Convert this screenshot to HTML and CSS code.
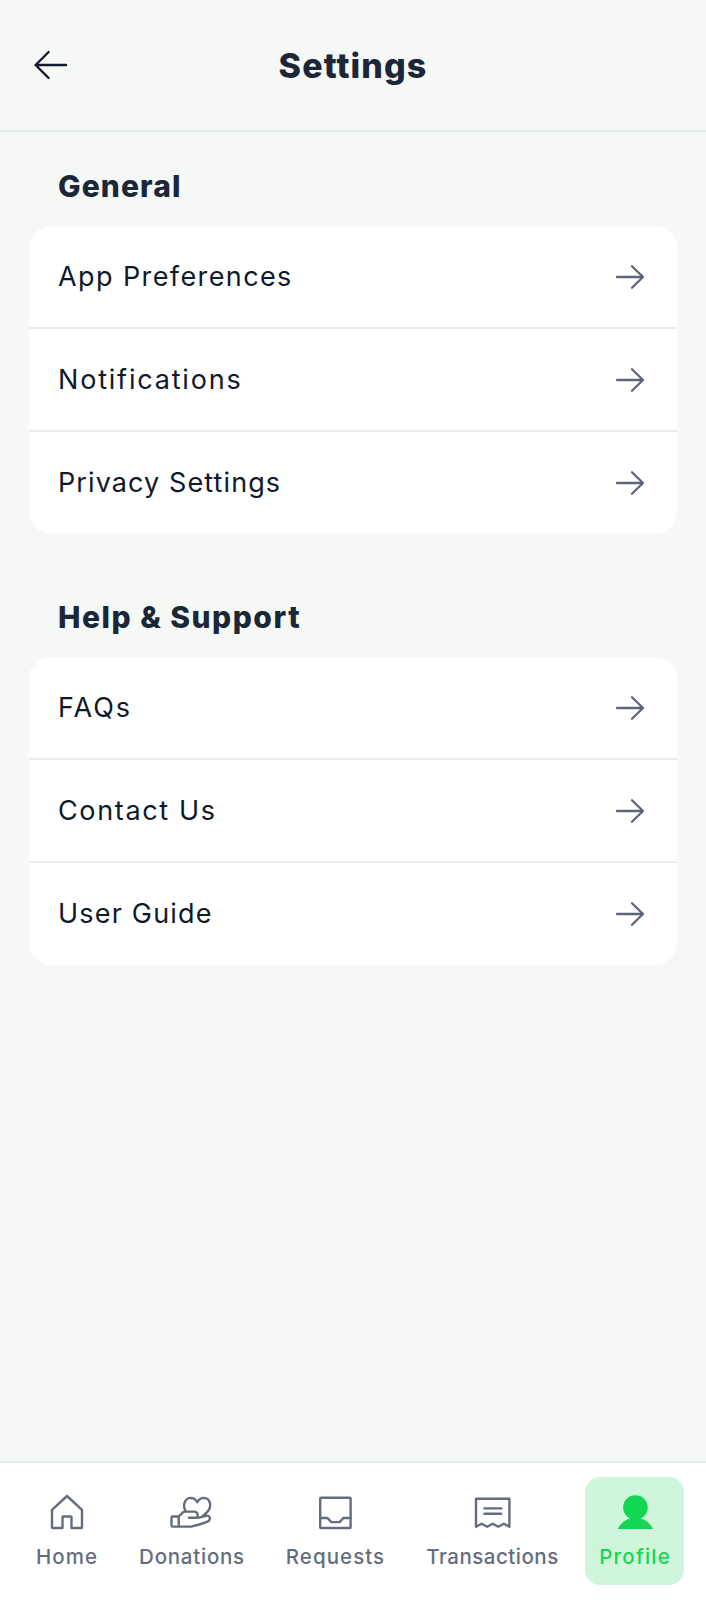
FILE: index.html
```html
<!DOCTYPE html>
<html lang="en">
<head>
<meta charset="utf-8">
<title>Settings</title>
<link rel="stylesheet" href="styles.css">
</head>
<body>
<svg class="defs" width="0" height="0" aria-hidden="true">
  <symbol id="arrow" viewBox="0 0 32 32"><path d="M3 16H29M18 5.2L29 16L18 26.8"/></symbol>
</svg>
<div class="screen">
  <header class="header">
    <svg class="icon back" viewBox="0 0 40 40"><path d="M36 20H5.6M18.6 7L5.6 20L18.6 33"/></svg>
    <h1 class="title">Settings</h1>
  </header>
  <main class="main">
    <section class="section">
      <h2 class="heading general">General</h2>
      <ul class="card">
        <li class="row"><span class="preferences">App Preferences</span><svg class="icon arrow"><use href="#arrow"/></svg></li>
        <li class="row"><span class="notifications">Notifications</span><svg class="icon arrow"><use href="#arrow"/></svg></li>
        <li class="row"><span class="privacy">Privacy Settings</span><svg class="icon arrow"><use href="#arrow"/></svg></li>
      </ul>
    </section>
    <section class="section">
      <h2 class="heading help">Help &amp; Support</h2>
      <ul class="card">
        <li class="row"><span class="faqs">FAQs</span><svg class="icon arrow"><use href="#arrow"/></svg></li>
        <li class="row"><span class="contact">Contact Us</span><svg class="icon arrow"><use href="#arrow"/></svg></li>
        <li class="row"><span class="guide">User Guide</span><svg class="icon arrow"><use href="#arrow"/></svg></li>
      </ul>
    </section>
  </main>
  <nav class="nav">
    <a class="tab"><svg class="icon tab-icon" viewBox="0 0 44 44"><path d="M7 18.8L22 5L37 18.8V36.3Q37 37 36.3 37H26.5V26.2Q26.5 25.5 25.8 25.5H18.2Q17.5 25.5 17.5 26.2V37H7.7Q7 37 7 36.3Z"/></svg><span class="label home">Home</span></a>
    <a class="tab"><svg class="icon tab-icon" viewBox="0 0 44 44"><path d="M2.7 25.5H8.7V35.6H2.7Q1.5 35.6 1.5 34.4V26.7Q1.5 25.5 2.7 25.5ZM8.7 25.5L13 21.3Q14 20.6 15 20.6H24Q27.5 20.6 27.7 24.5Q27.7 26.8 25.5 26.8H19M8.7 35.6H21Q30 33.8 37.5 30.7Q40.5 29 39.8 26.5Q39 24 36 24.8L28 26.8M15.6 20.4C12.4 14.4 14.7 7.2 20.5 6.9Q25 6.9 27.3 11.3Q29.6 6.9 33.8 6.9C40.3 7.2 42 15 38 20Q35.6 23 32 25.6"/></svg><span class="label donations">Donations</span></a>
    <a class="tab"><svg class="icon tab-icon" viewBox="0 0 44 44"><rect x="6.2" y="6.8" width="30.4" height="30.2" rx=".8"/><path d="M6.2 27H13.5L17.3 31.1H25.6L29.3 27H36.6"/></svg><span class="label requests">Requests</span></a>
    <a class="tab"><svg class="icon tab-icon" viewBox="0 0 44 44"><path d="M5 7.8H38.4V35.8L32.8 32.8L27.3 35.8L21.7 32.8L16.1 35.8L10.6 32.8L5 35.8ZM13.5 17.4H30.3M13.5 22.8H30.3"/></svg><span class="label transactions">Transactions</span></a>
    <a class="tab active"><svg class="tab-icon" viewBox="0 0 44 44"><path fill="currentColor" d="M17 27.5A12.3 12.3 0 1 1 27.8 27.5Q35.5 29.5 40 38H4.6Q9.3 29.5 17 27.5Z"/></svg><span class="label profile">Profile</span></a>
  </nav>
</div>
</body>
</html>
```

FILE: styles.css
```css
* { box-sizing: border-box; }
body { margin: 0; font-family: Inter, "Liberation Sans", sans-serif; color: #1b2637; background: #f6f8f6; }
.defs { display: block; }
.screen { height: 1600px; display: flex; flex-direction: column; }
.icon { fill: none; stroke: currentColor; stroke-width: 2.3; stroke-linecap: round; stroke-linejoin: round; }

.header { height: 132px; flex: none; padding: 0 30px; display: grid; grid-template-columns: 40px 1fr 40px; align-items: center; border-bottom: 2px solid #e4e7ec; }
.back { width: 40px; height: 40px; color: #111a2b; stroke-width: 2.4; }
.title { margin: 0; padding-top: 2px; font-size: 34px; font-weight: 800; line-height: 40px; letter-spacing: 1.1px; text-align: center; white-space: nowrap; }

.main { flex: 1; padding: 38px 29px 0; display: flex; flex-direction: column; gap: 67px; }
.section { display: flex; flex-direction: column; gap: 24px; }
.heading { margin: 0; padding-left: 29px; height: 32px; font-size: 30px; font-weight: 800; line-height: 32px; white-space: nowrap; }
.general { letter-spacing: 1.1px; }
.help { letter-spacing: 1.5px; }
.card { margin: 0; padding: 0; list-style: none; background: #fff; border-radius: 22px; overflow: hidden; }
.row { height: 103px; padding: 0 31px 0 29px; display: flex; align-items: center; justify-content: space-between; font-size: 27px; font-weight: 400; color: #0f192a; white-space: nowrap; border-bottom: 2px solid #e8ebf0; }
.row:last-child { height: 102px; border-bottom: 0; }
.row span { padding-bottom: 1px; }
.preferences { letter-spacing: 1.4px; }
.notifications { letter-spacing: 1.8px; }
.privacy { letter-spacing: 1.1px; }
.faqs { letter-spacing: 2px; }
.contact { letter-spacing: 1.65px; }
.guide { letter-spacing: 1.2px; }
.arrow { width: 32px; height: 32px; color: #5d6678; }

.nav { height: 139px; flex: none; padding: 14px 22px 15px 21px; display: grid; grid-template-columns: 92px 136px 129px 163px 99px; gap: 11px; background: #fff; border-top: 2px solid #e6e9ee; }
.tab { height: 108px; padding-top: 14px; display: flex; flex-direction: column; align-items: center; gap: 9px; border-radius: 15px; color: #646d7e; }
.tab-icon { width: 44px; height: 44px; stroke-width: 2.4; }
.active .tab-icon { stroke-width: 0; }
.label { font-size: 20.5px; font-weight: 460; line-height: 26px; white-space: nowrap; }
.home { letter-spacing: 1px; }
.donations { letter-spacing: .75px; }
.requests { letter-spacing: 1.05px; }
.transactions { letter-spacing: .5px; }
.profile { letter-spacing: 1.2px; margin-right: -1.2px; }
.active { background: #cff5dc; color: #13d652; }
```
